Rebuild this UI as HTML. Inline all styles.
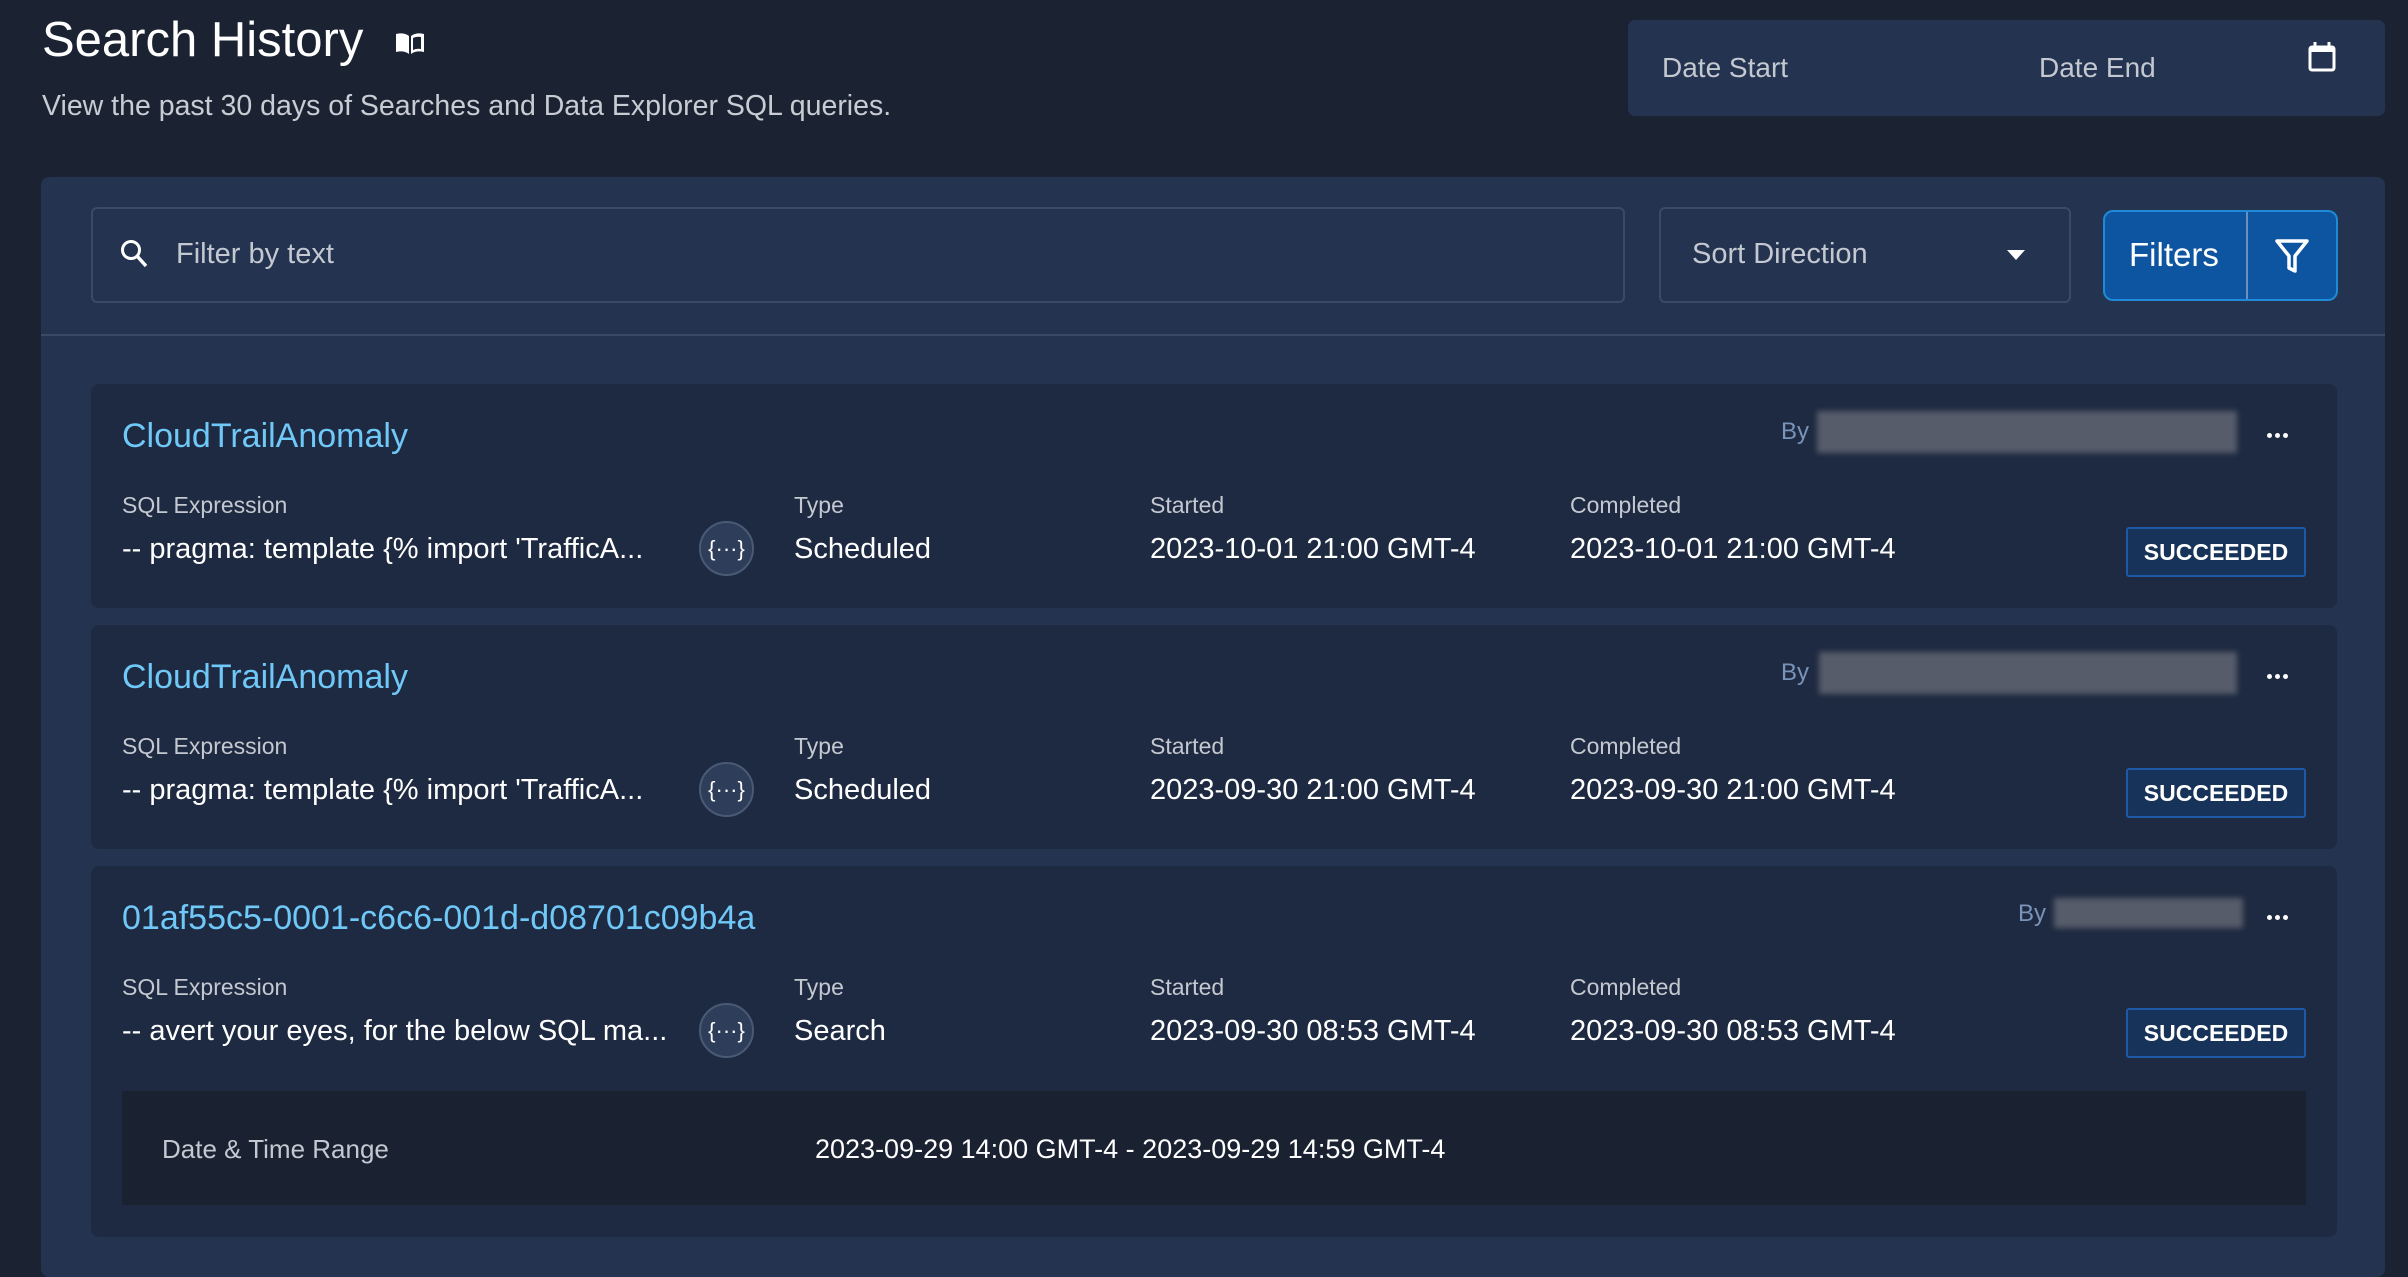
<!DOCTYPE html>
<html><head><meta charset="utf-8"><style>
*{box-sizing:border-box;margin:0;padding:0}
body{width:2408px;height:1254px;overflow:hidden;background:#1b2232;font-family:"Liberation Sans",sans-serif;color:#fff;position:relative}
.a{position:absolute;white-space:nowrap}
.panel{position:absolute;left:41px;top:177px;width:2344px;height:1100px;background:#233350;border-radius:8px}
.card{position:absolute;left:91px;width:2246px;background:#1e2a41;border-radius:8px}
.t{color:#6fc8f7;font-size:34px}
.lab{color:#c4c8d0;font-size:23px}
.val{color:#fff;font-size:29px}
.badge{position:absolute;width:180px;height:50px;background:#17335a;border:2px solid #1c5aa8;border-radius:3px;color:#fff;font-weight:bold;font-size:23px;text-align:center;line-height:46px}
.circ{position:absolute;width:55px;height:55px;border-radius:50%;background:#2e3e5a;border:2px solid #4a5a75}
.blur{position:absolute;background:#565c6a;filter:blur(3px)}
.by{color:#7a93b8;font-size:24px}
.dots{position:absolute;width:22px;height:6px}
.dots i{position:absolute;top:0;width:5px;height:5px;border-radius:50%;background:#fff}
</style></head><body>
<div class="a" style="left:42px;top:12px;font-size:49px;color:#fff">Search History</div>
<svg class="a" style="left:394px;top:30px" width="32" height="26" viewBox="0 0 32 26"><path d="M2 4c5-1 9-1 13 2v18c-4-3-8-3-13-2z M30 4c-5-1-9-1-13 2v18c4-3 8-3 13-2z" fill="#fff"/><path d="M19 8c3-1.5 6-1.5 8-1v12c-2-.5-5-.5-8 1z" fill="#1b2232"/></svg>
<div class="a" style="left:42px;top:90px;font-size:28.5px;color:#c8ccd3">View the past 30 days of Searches and Data Explorer SQL queries.</div>
<div class="a" style="left:1628px;top:20px;width:757px;height:96px;background:#233350;border-radius:7px"></div>
<div class="a" style="left:1662px;top:52px;font-size:28px;color:#c4c8d0">Date Start</div>
<div class="a" style="left:2039px;top:52px;font-size:28px;color:#c4c8d0">Date End</div>
<svg class="a" style="left:2306px;top:40px" width="32" height="32" viewBox="0 0 32 32"><rect x="4" y="7" width="24" height="23" rx="2" fill="none" stroke="#fff" stroke-width="3"/><rect x="4" y="7" width="24" height="5" fill="#fff"/><path d="M9 2v6M23 2v6" stroke="#fff" stroke-width="3"/></svg>

<div class="panel"></div>
<div class="a" style="left:91px;top:207px;width:1534px;height:96px;border:2px solid #3c4b64;border-radius:6px;background:#233350"></div>
<svg class="a" style="left:119px;top:238px" width="32" height="32" viewBox="0 0 32 32"><circle cx="12" cy="12" r="8.5" fill="none" stroke="#fff" stroke-width="3"/><path d="M18 18l9 10" stroke="#fff" stroke-width="3.5"/></svg>
<div class="a" style="left:176px;top:238px;font-size:29px;color:#c4c8d0">Filter by text</div>
<div class="a" style="left:1659px;top:207px;width:412px;height:96px;border:2px solid #3c4b64;border-radius:6px"></div>
<div class="a" style="left:1692px;top:238px;font-size:29px;color:#c4c8d0">Sort Direction</div>
<div class="a" style="left:2007px;top:250px;width:0;height:0;border-left:9px solid transparent;border-right:9px solid transparent;border-top:10px solid #fff"></div>
<div class="a" style="left:2103px;top:210px;width:235px;height:91px;background:#0d55a0;border:2px solid #1e8ad8;border-radius:10px"></div>
<div class="a" style="left:2246px;top:212px;width:2px;height:87px;background:#6b8fc0"></div>
<div class="a" style="left:2129px;top:236px;font-size:33px;color:#fff">Filters</div>
<svg class="a" style="left:2272px;top:236px" width="40" height="40" viewBox="0 0 40 40"><path d="M5 5h30L23 20v15l-6-3V20z" fill="none" stroke="#fff" stroke-width="3.5" stroke-linejoin="round"/></svg>
<div class="a" style="left:41px;top:334px;width:2344px;height:2px;background:#3a4a64"></div>

<!-- card 1 -->
<div class="card" style="top:384px;height:224px"></div>
<div class="a t" style="left:122px;top:417px">CloudTrailAnomaly</div>
<div class="a by" style="left:1781px;top:418px">By</div>
<div class="blur" style="left:1817px;top:411px;width:420px;height:42px"></div>
<div class="dots" style="left:2267px;top:433px"><i style="left:0"></i><i style="left:8px"></i><i style="left:16px"></i></div>
<div class="a lab" style="left:122px;top:492px">SQL Expression</div>
<div class="a val" style="left:122px;top:533px">-- pragma: template {% import 'TrafficA...</div>
<div class="circ" style="left:699px;top:521px"></div>
<div class="a lab" style="left:794px;top:492px">Type</div>
<div class="a val" style="left:794px;top:533px">Scheduled</div>
<div class="a lab" style="left:1150px;top:492px">Started</div>
<div class="a val" style="left:1150px;top:533px">2023-10-01 21:00 GMT-4</div>
<div class="a lab" style="left:1570px;top:492px">Completed</div>
<div class="a val" style="left:1570px;top:533px">2023-10-01 21:00 GMT-4</div>
<div class="badge" style="left:2126px;top:527px">SUCCEEDED</div>

<!-- card 2 -->
<div class="card" style="top:625px;height:224px"></div>
<div class="a t" style="left:122px;top:658px">CloudTrailAnomaly</div>
<div class="a by" style="left:1781px;top:659px">By</div>
<div class="blur" style="left:1819px;top:652px;width:418px;height:42px"></div>
<div class="dots" style="left:2267px;top:674px"><i style="left:0"></i><i style="left:8px"></i><i style="left:16px"></i></div>
<div class="a lab" style="left:122px;top:733px">SQL Expression</div>
<div class="a val" style="left:122px;top:774px">-- pragma: template {% import 'TrafficA...</div>
<div class="circ" style="left:699px;top:762px"></div>
<div class="a lab" style="left:794px;top:733px">Type</div>
<div class="a val" style="left:794px;top:774px">Scheduled</div>
<div class="a lab" style="left:1150px;top:733px">Started</div>
<div class="a val" style="left:1150px;top:774px">2023-09-30 21:00 GMT-4</div>
<div class="a lab" style="left:1570px;top:733px">Completed</div>
<div class="a val" style="left:1570px;top:774px">2023-09-30 21:00 GMT-4</div>
<div class="badge" style="left:2126px;top:768px">SUCCEEDED</div>

<!-- card 3 -->
<div class="card" style="top:866px;height:371px"></div>
<div class="a t" style="left:122px;top:899px">01af55c5-0001-c6c6-001d-d08701c09b4a</div>
<div class="a by" style="left:2018px;top:900px">By</div>
<div class="blur" style="left:2054px;top:898px;width:189px;height:30px"></div>
<div class="dots" style="left:2267px;top:915px"><i style="left:0"></i><i style="left:8px"></i><i style="left:16px"></i></div>
<div class="a lab" style="left:122px;top:974px">SQL Expression</div>
<div class="a val" style="left:122px;top:1015px">-- avert your eyes, for the below SQL ma...</div>
<div class="circ" style="left:699px;top:1003px"></div>
<div class="a lab" style="left:794px;top:974px">Type</div>
<div class="a val" style="left:794px;top:1015px">Search</div>
<div class="a lab" style="left:1150px;top:974px">Started</div>
<div class="a val" style="left:1150px;top:1015px">2023-09-30 08:53 GMT-4</div>
<div class="a lab" style="left:1570px;top:974px">Completed</div>
<div class="a val" style="left:1570px;top:1015px">2023-09-30 08:53 GMT-4</div>
<div class="badge" style="left:2126px;top:1008px">SUCCEEDED</div>
<div class="a" style="left:122px;top:1091px;width:2184px;height:114px;background:#1a2232"></div>
<div class="a" style="left:162px;top:1134px;font-size:26px;color:#c4c8d0">Date &amp; Time Range</div>
<div class="a" style="left:815px;top:1134px;font-size:27px;color:#fff">2023-09-29 14:00 GMT-4 - 2023-09-29 14:59 GMT-4</div>

<svg width="0" height="0" style="position:absolute">
<defs><g id="br"><text x="0" y="0" font-family="Liberation Sans" font-size="22" fill="#fff">{</text></g></defs>
</svg>
<svg class="a" style="left:699px;top:521px" width="55" height="55" viewBox="0 0 55 55"><text x="27.5" y="35" text-anchor="middle" font-family="Liberation Sans" font-size="22" fill="#fff">{···}</text></svg>
<svg class="a" style="left:699px;top:762px" width="55" height="55" viewBox="0 0 55 55"><text x="27.5" y="35" text-anchor="middle" font-family="Liberation Sans" font-size="22" fill="#fff">{···}</text></svg>
<svg class="a" style="left:699px;top:1003px" width="55" height="55" viewBox="0 0 55 55"><text x="27.5" y="35" text-anchor="middle" font-family="Liberation Sans" font-size="22" fill="#fff">{···}</text></svg>
</body></html>
